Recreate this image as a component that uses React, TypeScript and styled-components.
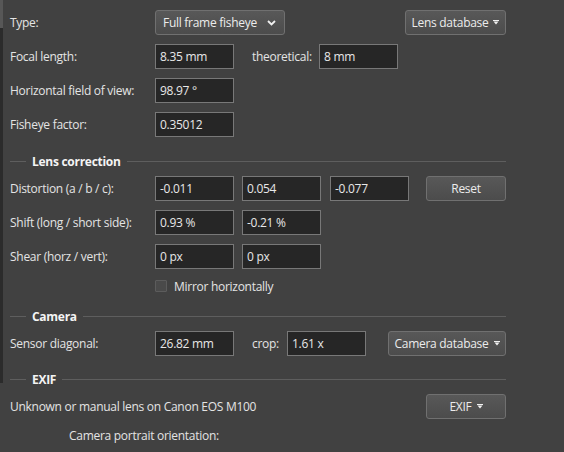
import styled, { createGlobalStyle } from 'styled-components';

const GlobalStyle = createGlobalStyle`
  html, body {
    margin: 0;
    padding: 0;
    background: #414141;
  }
  body {
    font-family: 'Open Sans', 'Noto Sans', sans-serif;
    font-size: 12px;
    letter-spacing: -0.28px;
    color: #e4e4e4;
  }
`;

const Panel = styled.div`
  width: 564px;
  height: 452px;
  box-sizing: border-box;
  padding: 10px 58px 0 10px;
  display: flex;
  flex-direction: column;
  background:
    linear-gradient(#575757, #575757) 0 0 / 3px 28px no-repeat,
    linear-gradient(#2b2b2b, #2b2b2b) 0 0 / 3px 383px no-repeat,
    #414141;
  overflow: hidden;
`;

const Row = styled.div<{ $top?: number }>`
  display: flex;
  align-items: center;
  height: 25px;
  margin-top: ${(p) => p.$top ?? 9}px;
`;

const Label = styled.span`
  width: 145px;
  flex: none;
  white-space: nowrap;
`;

const Text = styled.span<{ $left?: number; $width?: number }>`
  margin-left: ${(p) => p.$left ?? 0}px;
  width: ${(p) => (p.$width ? `${p.$width}px` : 'auto')};
  white-space: nowrap;
`;

const Field = styled.div<{ $left?: number }>`
  width: 79px;
  height: 25px;
  box-sizing: border-box;
  flex: none;
  margin-left: ${(p) => p.$left ?? 0}px;
  padding: 0 4px;
  display: flex;
  align-items: center;
  background: #262626;
  border: 1px solid #787878;
  color: #e8e8e8;
  white-space: nowrap;
`;

const Button = styled.div<{ $width: number; $auto?: boolean; $left?: number }>`
  width: ${(p) => p.$width}px;
  height: 25px;
  box-sizing: border-box;
  flex: none;
  margin-left: ${(p) => (p.$auto ? 'auto' : `${p.$left ?? 0}px`)};
  display: flex;
  align-items: center;
  justify-content: center;
  gap: 5px;
  background: linear-gradient(#585858, #4c4c4c);
  border: 1px solid #707070;
  border-radius: 3px;
  color: #ececec;
  white-space: nowrap;
`;

const Combo = styled(Button)`
  justify-content: space-between;
  padding: 0 8px 0 7px;
`;

const Header = styled.div<{ $top: number }>`
  display: flex;
  align-items: center;
  gap: 6px;
  height: 16px;
  margin-top: ${(p) => p.$top}px;
  margin-bottom: -1px;
  font-weight: 700;
  color: #f4f4f4;
  &::before {
    content: '';
    width: 16px;
    height: 1px;
    background: #5e5e5e;
  }
  &::after {
    content: '';
    flex: 1;
    height: 1px;
    background: #5e5e5e;
  }
`;

const CheckRow = styled.label`
  display: flex;
  align-items: center;
  gap: 7px;
  height: 14px;
  margin-top: 10px;
  padding-left: 145px;
`;

const Box = styled.span`
  width: 12px;
  height: 12px;
  box-sizing: border-box;
  border: 1px solid #5c5c5c;
  background: #4a4a4a;
  border-radius: 1px;
`;

const Line = styled.div<{ $top: number; $left?: number }>`
  height: 16px;
  display: flex;
  align-items: center;
  margin-top: ${(p) => p.$top}px;
  padding-left: ${(p) => p.$left ?? 0}px;
  white-space: nowrap;
`;

const Arrow = () => (
  <svg width="6" height="5" viewBox="0 0 6 5">
    <rect x="0" y="0" width="6" height="1" fill="#f0f0f0" />
    <path d="M0.5 1.5 L5.5 1.5 L3 4.5 Z" fill="#f0f0f0" />
  </svg>
);

const Chevron = () => (
  <svg width="9" height="6" viewBox="0 0 9 6">
    <path d="M1 1 L4.5 4.5 L8 1" fill="none" stroke="#f0f0f0" strokeWidth="1.8" />
  </svg>
);

export default function App() {
  return (
    <>
      <GlobalStyle />
      <Panel>
        <Row $top={0}>
          <Label>Type:</Label>
          <Combo $width={130}>
            <span>Full frame fisheye</span>
            <Chevron />
          </Combo>
          <Button $width={101} $auto>
            <span>Lens database</span>
            <Arrow />
          </Button>
        </Row>
        <Row>
          <Label>Focal length:</Label>
          <Field>8.35 mm</Field>
          <Text $left={18} $width={67}>theoretical:</Text>
          <Field>8 mm</Field>
        </Row>
        <Row>
          <Label>Horizontal field of view:</Label>
          <Field>98.97 °</Field>
        </Row>
        <Row>
          <Label>Fisheye factor:</Label>
          <Field>0.35012</Field>
        </Row>

        <Header $top={16}>Lens correction</Header>
        <Row $top={8}>
          <Label>Distortion (a / b / c):</Label>
          <Field>-0.011</Field>
          <Field $left={8}>0.054</Field>
          <Field $left={9}>-0.077</Field>
          <Button $width={80} $auto>Reset</Button>
        </Row>
        <Row>
          <Label>Shift (long / short side):</Label>
          <Field>0.93 %</Field>
          <Field $left={8}>-0.21 %</Field>
        </Row>
        <Row>
          <Label>Shear (horz / vert):</Label>
          <Field>0 px</Field>
          <Field $left={8}>0 px</Field>
        </Row>
        <CheckRow>
          <Box />
          <span>Mirror horizontally</span>
        </CheckRow>

        <Header $top={15}>Camera</Header>
        <Row $top={8}>
          <Label>Sensor diagonal:</Label>
          <Field>26.82 mm</Field>
          <Text $left={18} $width={35}>crop:</Text>
          <Field>1.61 x</Field>
          <Button $width={118} $auto>
            <span>Camera database</span>
            <Arrow />
          </Button>
        </Row>

        <Header $top={15}>EXIF</Header>
        <Row $top={8}>
          <Text>Unknown or manual lens on Canon EOS M100</Text>
          <Button $width={80} $auto>
            <span>EXIF</span>
            <Arrow />
          </Button>
        </Row>
        <Line $top={8} $left={59}>Camera portrait orientation:</Line>
      </Panel>
    </>
  );
}
